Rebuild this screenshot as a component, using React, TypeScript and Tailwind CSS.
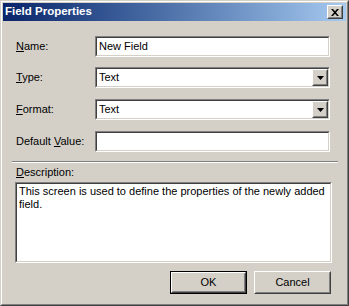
import React from 'react';

const font = { fontFamily: '"Liberation Sans", Arial, sans-serif' };

// sunken 3d edge used by edits, combos and the memo box
function Sunken({ className = '', children }: { className?: string; children?: React.ReactNode }) {
  return (
    <div className={`border border-t-[#808080] border-l-[#808080] border-b-white border-r-white ${className}`}>
      <div className="h-full border border-t-[#404040] border-l-[#404040] border-b-[#d4d0c8] border-r-[#d4d0c8] bg-white">
        {children}
      </div>
    </div>
  );
}

function Raised({ className = '', children }: { className?: string; children?: React.ReactNode }) {
  return (
    <div className={`border border-t-white border-l-white border-b-[#404040] border-r-[#404040] ${className}`}>
      <div className="h-full border border-t-[#d4d0c8] border-l-[#d4d0c8] border-b-[#808080] border-r-[#808080] bg-[#d4d0c8] flex items-center justify-center">
        {children}
      </div>
    </div>
  );
}

function TextField({ value = '' }: { value?: string }) {
  return (
    <Sunken className="w-[235px] h-[21px]">
      <div className="h-full flex items-center pl-[2px] text-black">{value}</div>
    </Sunken>
  );
}

function Combo({ value }: { value: string }) {
  return (
    <Sunken className="w-[235px] h-[21px]">
      <div className="h-full flex items-center justify-between">
        <span className="pl-[2px] text-black">{value}</span>
        <Raised className="w-[16px] h-[17px]">
          <svg width="7" height="4" viewBox="0 0 7 4">
            <path d="M0 0h7L3.5 4z" fill="#000" />
          </svg>
        </Raised>
      </div>
    </Sunken>
  );
}

function Row({ label, children }: { label: React.ReactNode; children: React.ReactNode }) {
  return (
    <div className="flex items-center">
      <div className="w-[79px] text-black">{label}</div>
      {children}
    </div>
  );
}

export default function App() {
  return (
    <div className="w-[349px] h-[306px] text-[11px] select-none" style={font}>
      {/* window frame */}
      <div className="w-full h-full border border-t-[#d4d0c8] border-l-[#d4d0c8] border-b-[#404040] border-r-[#404040]">
        <div className="w-full h-full border border-t-white border-l-white border-b-[#808080] border-r-[#808080] bg-[#d4d0c8] p-px flex flex-col">
          {/* Title bar */}
          <div className="h-[18px] flex items-center justify-between pl-[2px] pr-[3px] bg-gradient-to-r from-[#0a246a] to-[#a6caf0]">
            <span className="text-white font-bold text-[11.5px]">Field Properties</span>
            <Raised className="w-[16px] h-[14px]">
              <svg width="8" height="7" viewBox="0 0 8 7">
                <path d="M0 0h2l2 2.2L6 0h2L5 3.5 8 7H6L4 4.8 2 7H0l3-3.5z" fill="#000" />
              </svg>
            </Raised>
          </div>

          {/* Body */}
          <div className="flex-1 flex flex-col pl-[13px] pr-[16px] pt-[15px]">
            <Row label={<span><u>N</u>ame:</span>}>
              <TextField value="New Field" />
            </Row>
            <div className="mt-[10px]">
              <Row label={<span><u>T</u>ype:</span>}>
                <Combo value="Text" />
              </Row>
            </div>
            <div className="mt-[11px]">
              <Row label={<span><u>F</u>ormat:</span>}>
                <Combo value="Text" />
              </Row>
            </div>
            <div className="mt-[11px]">
              <Row label={<span>Default <u>V</u>alue:</span>}>
                <TextField />
              </Row>
            </div>

            {/* separator */}
            <div className="mt-[9px] -ml-[4px] w-[326px] border-t border-t-[#808080] border-b border-b-white" />

            <div className="mt-[3px] text-black leading-[13px]"><u>D</u>escription:</div>
            <Sunken className="mt-[3px] -ml-px w-[317px] h-[81px]">
              <div className="px-[2px] pt-px leading-[13px] text-black">
                This screen is used to define the properties of the newly added field.
              </div>
            </Sunken>

            <div className="mt-[8px] flex justify-end gap-[7px] -mr-px">
              <div className="border border-black">
                <Raised className="w-[75px] h-[21px]">
                  <span className="text-black">OK</span>
                </Raised>
              </div>
              <Raised className="w-[77px] h-[23px]">
                <span className="text-black">Cancel</span>
              </Raised>
            </div>
          </div>
        </div>
      </div>
    </div>
  );
}
